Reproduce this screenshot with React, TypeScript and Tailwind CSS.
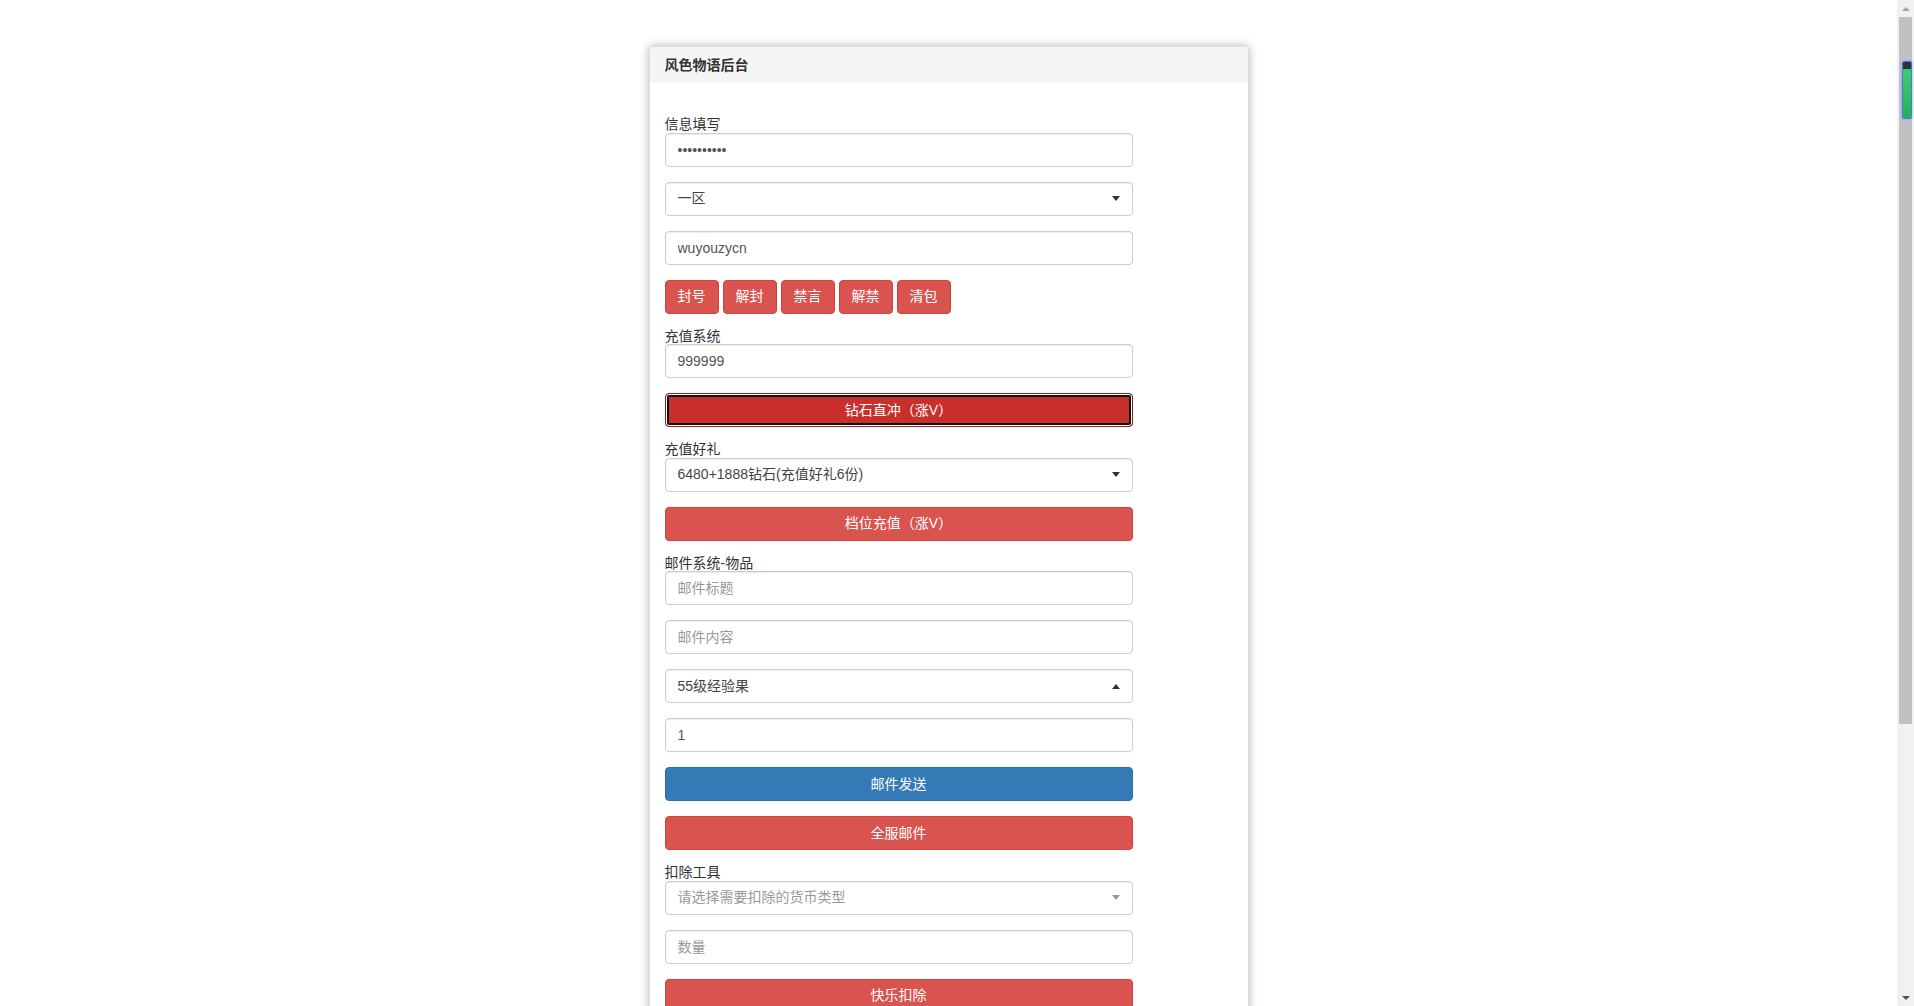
import React from 'react';

type SelectProps = { value: string; open?: boolean; placeholder?: boolean };

// select2-style single select box
function FakeSelect({ value, open, placeholder }: SelectProps) {
  return (
    <div className="mb-[15px] flex h-[34px] w-[468px] items-center justify-between rounded-[4px] border border-[#ccc] bg-white pl-[12px] pr-[12px] shadow-[inset_0_1px_1px_rgba(0,0,0,0.075)]">
      <span className={placeholder ? 'text-[14px] text-[#999]' : 'text-[14px] text-[#444]'}>{value}</span>
      {open ? (
        <span className="h-0 w-0 border-x-[4px] border-b-[5px] border-x-transparent border-b-[#333]" />
      ) : (
        <span
          className={
            placeholder
              ? 'h-0 w-0 border-x-[4px] border-t-[5px] border-x-transparent border-t-[#999]'
              : 'h-0 w-0 border-x-[4px] border-t-[5px] border-x-transparent border-t-[#333]'
          }
        />
      )}
    </div>
  );
}

function TextInput({ value, placeholder, type = 'text' }: { value?: string; placeholder?: string; type?: string }) {
  return (
    <input
      type={type}
      readOnly
      value={value ?? ''}
      placeholder={placeholder}
      className="mb-[15px] block h-[34px] w-[468px] rounded-[4px] border border-[#ccc] bg-white px-[12px] text-[14px] text-[#555] shadow-[inset_0_1px_1px_rgba(0,0,0,0.075)] outline-none placeholder:text-[#999]"
    />
  );
}

function Label({ children }: { children: React.ReactNode }) {
  return <div className="h-[15.5px] text-[14px] leading-[15px] text-[#333]">{children}</div>;
}

function WideButton({ children, tone = 'danger' }: { children: React.ReactNode; tone?: 'danger' | 'primary' | 'active' }) {
  const styles = {
    danger: 'bg-[#d9534f] border-[#d43f3a]',
    primary: 'bg-[#337ab7] border-[#2e6da4]',
    active: 'bg-[#c9302c] border-[#8f1f1c] shadow-[inset_0_0_0_1px_#fff,inset_0_0_0_3px_#111]',
  }[tone];
  return (
    <button
      type="button"
      className={`mb-[15px] block h-[34px] w-[468px] rounded-[4px] border text-[14px] text-white ${styles}`}
    >
      {children}
    </button>
  );
}

function SmallButton({ children }: { children: React.ReactNode }) {
  return (
    <button
      type="button"
      className="h-[34px] rounded-[4px] border border-[#d43f3a] bg-[#d9534f] px-[12px] text-[14px] text-white"
    >
      {children}
    </button>
  );
}

function Scrollbar() {
  return (
    <div className="relative flex h-full w-[17px] shrink-0 flex-col bg-[#f1f1f1]">
      <div className="flex h-[17px] items-center justify-center">
        <span className="h-0 w-0 border-x-[4px] border-b-[4px] border-x-transparent border-b-[#a3a3a3]" />
      </div>
      <div className="flex-1 px-[2px]">
        <div className="h-[707px] w-full bg-[#c1c1c1]" />
      </div>
      <div className="flex h-[17px] items-center justify-center">
        <span className="h-0 w-0 border-x-[4px] border-t-[4px] border-x-transparent border-t-[#505050]" />
      </div>
      {/* battery-like marker sitting on the thumb */}
      <div className="absolute left-[5px] top-[61px] flex h-[58px] w-[10px] flex-col overflow-hidden rounded-[2px] border border-[#5b6cf0] shadow-[0_0_2px_#3fa9f5]">
        <div className="h-[7px] bg-[#2e2f3a]" />
        <div className="flex-1 bg-gradient-to-b from-[#3ccf6e] to-[#1fb356]" />
      </div>
    </div>
  );
}

export default function App() {
  return (
    <div className="flex h-screen w-full overflow-hidden bg-white font-['Liberation_Sans','Noto_Sans_CJK_SC',sans-serif]">
      <div className="flex-1 overflow-hidden">
        <div className="mx-auto mt-[46px] w-[600px] rounded-[4px] border border-[#ddd] bg-white shadow-[0_0_10px_rgba(0,0,0,0.3)]">
          <div className="flex h-[36px] items-center rounded-t-[3px] bg-[#f5f5f5] px-[15px] text-[14px] font-bold text-[#333]">
            风色物语后台
          </div>
          <div className="px-[15px] pb-[15px] pt-[34px]">
            <Label>信息填写</Label>
            <TextInput type="password" value="1234567890" />
            <FakeSelect value="一区" />
            <TextInput value="wuyouzycn" />
            <div className="mb-[15px] flex gap-[4px]">
              <SmallButton>封号</SmallButton>
              <SmallButton>解封</SmallButton>
              <SmallButton>禁言</SmallButton>
              <SmallButton>解禁</SmallButton>
              <SmallButton>清包</SmallButton>
            </div>

            <Label>充值系统</Label>
            <TextInput value="999999" />
            <WideButton tone="active">钻石直冲（涨V）</WideButton>

            <Label>充值好礼</Label>
            <FakeSelect value="6480+1888钻石(充值好礼6份)" />
            <WideButton>档位充值（涨V）</WideButton>

            <Label>邮件系统-物品</Label>
            <TextInput placeholder="邮件标题" />
            <TextInput placeholder="邮件内容" />
            <FakeSelect value="55级经验果" open />
            <TextInput value="1" />
            <WideButton tone="primary">邮件发送</WideButton>
            <WideButton>全服邮件</WideButton>

            <Label>扣除工具</Label>
            <FakeSelect value="请选择需要扣除的货币类型" placeholder />
            <TextInput placeholder="数量" />
            <WideButton>快乐扣除</WideButton>
          </div>
        </div>
      </div>
      <Scrollbar />
    </div>
  );
}
